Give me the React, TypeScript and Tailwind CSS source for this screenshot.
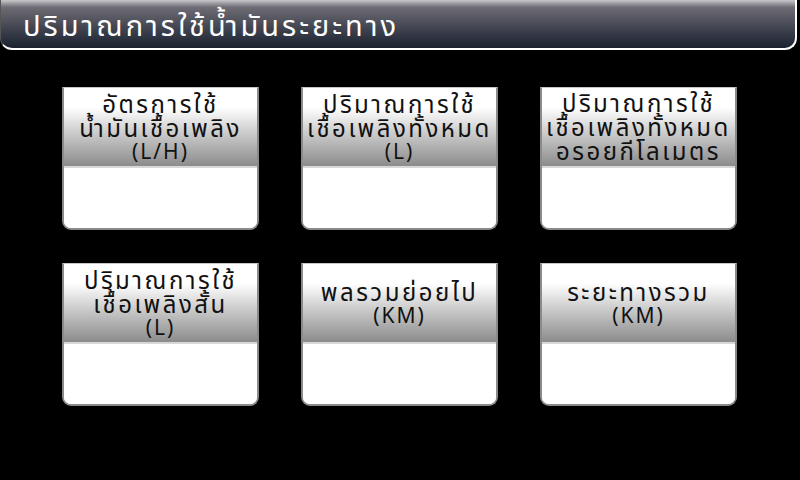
const cards = [
  ['อัตรการใช้', 'น้ำมันเชื้อเพลิง', '(L/H)'],
  ['ปริมาณการใช้', 'เชื้อเพลิงทั้งหมด', '(L)'],
  ['ปริมาณการใช้', 'เชื้อเพลิงทั้งหมด', 'อรอยกีโลเมตร'],
  ['ปริมาณการใช้', 'เชื้อเพลิงสั้น', '(L)'],
  ['พลรวมย่อยไป', '(KM)'],
  ['ระยะทางรวม', '(KM)'],
]

const font = { fontFamily: '"Noto Sans Thai", "Noto Sans", "DejaVu Sans", sans-serif' }

const Card = ({ lines }: { lines: string[] }) => (
  <div className="flex h-[143px] flex-col overflow-hidden rounded-b-[9px] border-2 border-t border-[#8a8a8a] border-t-[#c8c8c8] bg-white">
    <div className="flex h-[80px] flex-col items-center justify-center border-b-2 border-[#d8d8d8] bg-gradient-to-b from-white from-25% to-[#8c8c8c] pt-1">
      {lines.map((l, i) => (
        <div
          key={i}
          className={
            l.startsWith('(')
              ? 'text-[21px] leading-[22px] tracking-[2px] text-[#111]'
              : 'text-[24px] leading-[24px] tracking-[2.5px] text-[#111]'
          }
        >
          {l}
        </div>
      ))}
    </div>
    <div className="flex-1 bg-white" />
  </div>
)

export default function App() {
  return (
    <div className="h-[480px] w-[800px] bg-black" style={font}>
      <div className="pr-[3px]">
        <div className="flex h-[50px] items-center rounded-b-[12px] border-b-2 border-r-2 border-l border-white border-l-[#555] bg-gradient-to-b from-[#c8c8cc] via-[#6e6c74] via-15% to-[#1a2230] pl-[22px] pt-[5px]">
          <span className="text-[29px] leading-[32px] tracking-[3px] text-white">ปริมาณการใช้น้ำมันระยะทาง</span>
        </div>
      </div>
      <div className="grid grid-cols-[197px_197px_197px] gap-x-[42px] gap-y-[33px] pl-[62px] pt-[37px]">
        {cards.map((c, i) => (
          <Card key={i} lines={c} />
        ))}
      </div>
    </div>
  )
}
